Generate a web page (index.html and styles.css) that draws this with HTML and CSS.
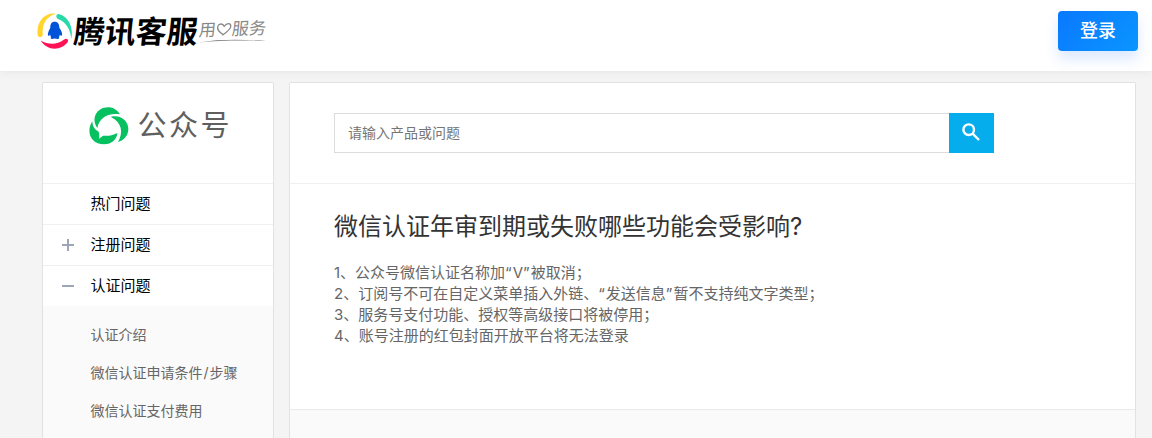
FILE: index.html
```
<!DOCTYPE html>
<html lang="zh-CN">
<head>
  <meta charset="UTF-8" />
  <meta name="viewport" content="width=device-width, initial-scale=1.0"/>
  <title>腾讯客服</title>
  <link rel="stylesheet" href="styles.css">
</head>
<body>

  <header class="header">
    <div class="logo">
      <svg class="logo-mark" viewBox="22 40 106 106">
        <path fill="#ffd52b" d="M76 42C43 38 19 68 24 105C26 114 38 113 39 103C36 72 50 51 76 43Z"/>
        <path fill="#2bd9a8" d="M86 43C114 49 130 82 123 116C119 84 106 67 84 58C76 53 78 42 86 43Z"/>
        <path fill="#ff1155" d="M33 121C51 152 92 152 112 126C117 118 108 112 102 118C79 135 56 134 33 121Z"/>
        <path fill="#0052d9" d="M74 66C64 66 61 74 61 84C55 94 52 105 56 107C58 108 60 104 61 103C61 107 62 109 64 111C58 117 67 117 74 115C82 117 92 117 86 111C88 109 89 107 89 103C91 106 94 108 95 106C98 102 94 92 88 84C88 74 84 66 74 66Z"/>
      </svg>
      <span class="logo-name">腾讯客服</span>
      <span class="slogan">
        <span class="slogan-text">用<svg class="heart" viewBox="0 0 16 14"><path d="M8 12.5C4 10 1 7 1.5 4C2 1 6 .5 8 4C10 .5 14 .5 14.5 4C15 7 11 10 7 13"/></svg>服务</span>
        <svg class="slogan-line" viewBox="0 0 67 4"><path d="M0 3.5C20 0 45 .5 67 2C45 1.3 20 1.3 0 3.5Z"/></svg>
      </span>
    </div>
    <a class="login-btn">登录</a>
  </header>

  <div class="container">
    <aside class="sidebar">
      <div class="product">
        <svg class="product-icon" viewBox="176 92 120 114">
          <path d="M201 155C181 127 199 93 233 93C249 93 261 101 269 114C234 108 206 124 201 155Z"/>
          <path d="M242 121C270 114 295 133 294 159C294 176 281 193 263 197C280 169 274 137 242 122Z"/>
          <path d="M186 135C186 150 194 161 205 166Q208 177 206 187L218 178C234 180 246 177 261 170C260 188 245 204 221 204C181 204 166 166 186 135Z"/>
        </svg>
        <span class="product-name">公众号</span>
      </div>
      <ul class="menu">
        <li class="menu-item">热门问题</li>
        <li class="menu-item"><span class="toggle plus"></span>注册问题</li>
        <li class="menu-item"><span class="toggle"></span>认证问题</li>
      </ul>
      <ul class="submenu">
        <li>认证介绍</li>
        <li>微信认证申请条件<span class="slash">/</span>步骤</li>
        <li>微信认证支付费用</li>
      </ul>
    </aside>

    <main class="main">
      <form class="search">
        <input type="text" class="search-input" placeholder="请输入产品或问题" />
        <button type="button" class="search-btn">
          <svg viewBox="0 0 18 18"><circle cx="6.7" cy="6.7" r="5.3"/><path d="M10.6 10.6L17 17"/></svg>
        </button>
      </form>
      <article class="article">
        <h1>微信认证年审到期或失败哪些功能会受影响?</h1>
        <p>1、公众号微信认证名称加<span class="quote">“</span>V<span class="quote">”</span>被取消；</p>
        <p>2、订阅号不可在自定义菜单插入外链、<span class="quote">“</span>发送信息<span class="quote">”</span>暂不支持纯文字类型；</p>
        <p>3、服务号支付功能、授权等高级接口将被停用；</p>
        <p>4、账号注册的红包封面开放平台将无法登录</p>
      </article>
    </main>
  </div>

</body>
</html>
```
FILE: styles.css
```
* {
  box-sizing: border-box;
}
body {
  display: flex;
  flex-direction: column;
  margin: 0;
  height: 100vh;
  background-color: #f4f4f4;
  font-family: Inter, "Noto Sans CJK SC", sans-serif;
  color: #000;
}
ul {
  list-style: none;
  margin: 0;
  padding: 0;
}

/* header */
.header {
  position: relative;
  display: flex;
  justify-content: space-between;
  align-items: flex-start;
  height: 71px;
  padding: 11px 14px 0 37px;
  background-color: #fff;
  box-shadow: 0 2px 8px rgba(0, 0, 0, 0.05);
}
.logo {
  display: flex;
  padding-top: 2px;
}
.logo-mark {
  width: 36px;
  height: 36px;
}
.logo-name {
  width: 125px;
  margin-left: 1px;
  font-size: 31px;
  line-height: 37px;
  font-weight: 700;
  white-space: nowrap;
  transform: skewX(-6deg);
}
.slogan {
  display: flex;
  flex-direction: column;
  width: 67px;
  padding-top: 6px;
}
.slogan-text {
  display: flex;
  align-items: center;
  font-size: 17px;
  line-height: 20px;
  font-weight: 400;
  color: #888;
  transform: skewX(-8deg) rotate(-2deg);
}
.heart {
  width: 16px;
  height: 14px;
  fill: none;
  stroke: #888;
  stroke-width: 1.3;
}
.slogan-line {
  width: 67px;
  height: 4px;
  fill: #777;
}
.login-btn {
  width: 80px;
  height: 40px;
  border-radius: 4px;
  background: linear-gradient(135deg, #0a78ff, #0a96ff);
  box-shadow: 0 8px 14px rgba(10, 90, 255, 0.14);
  color: #fff;
  font-size: 18px;
  line-height: 40px;
  font-weight: 500;
  text-align: center;
}

/* layout */
.container {
  display: flex;
  flex: 1;
  gap: 15px;
  min-height: 0;
  padding: 11px 16px 0 42px;
}
.sidebar,
.main {
  border: 1px solid #e2e2e2;
  border-bottom: 0;
  border-radius: 2px 2px 0 0;
  background-color: #fafafa;
  overflow: hidden;
}
.sidebar {
  width: 232px;
}
.main {
  flex: 1;
}

/* sidebar */
.product {
  display: flex;
  align-items: center;
  height: 100px;
  padding: 0 0 14px 45.5px;
  background-color: #fff;
}
.product-icon {
  width: 40px;
  height: 38px;
  fill: #07c160;
}
.product-name {
  margin-left: 9px;
  font-size: 29px;
  line-height: 40px;
  letter-spacing: 2.5px;
  color: #5f5f5f;
}
.menu-item {
  display: flex;
  align-items: center;
  height: 41px;
  padding: 0 0 4px 47.5px;
  border-top: 1px solid #f0f0f0;
  background-color: #fff;
  font-size: 15px;
}
.toggle {
  width: 12px;
  height: 12px;
  margin: 4px 17px 0 -29px;
  background: linear-gradient(#9ca6b8, #9ca6b8) center / 12px 2px no-repeat;
}
.plus {
  margin-top: 3px;
  background: linear-gradient(#9ca6b8, #9ca6b8) center / 12px 2px no-repeat,
    linear-gradient(#9ca6b8, #9ca6b8) center / 2px 12px no-repeat;
}
.submenu {
  padding-top: 10px;
}
.submenu li {
  padding-left: 47.5px;
  font-size: 14px;
  line-height: 38px;
  color: #666;
}
.slash {
  padding: 0 1px;
}

/* main */
.search {
  display: flex;
  height: 101px;
  padding: 30px 0 0 44px;
  border-bottom: 1px solid #f0f0f0;
  background-color: #fff;
}
.search-input {
  width: 615px;
  height: 40px;
  padding: 0 13px 2px;
  border: 1px solid #dcdcdc;
  border-right: 0;
  font-family: inherit;
  font-size: 14px;
}
.search-input::placeholder {
  color: #757575;
}
.search-btn {
  width: 45px;
  height: 40px;
  padding: 0;
  border: 0;
  background-color: #05adec;
}
.search-btn svg {
  display: block;
  width: 18px;
  height: 18px;
  margin: -2px 0 0 13px;
  fill: none;
  stroke: #fff;
  stroke-width: 2.4;
}
.article {
  height: 226px;
  padding: 25px 44px 0;
  border-bottom: 1px solid #eaeaea;
  background-color: #fff;
}
.article h1 {
  margin: 0 0 17px;
  font-size: 24px;
  line-height: 36px;
  font-weight: 400;
  color: #333;
}
.article p {
  margin: 0;
  font-size: 15px;
  line-height: 21px;
  color: #666;
}
.quote {
  letter-spacing: 1px;
}
```
